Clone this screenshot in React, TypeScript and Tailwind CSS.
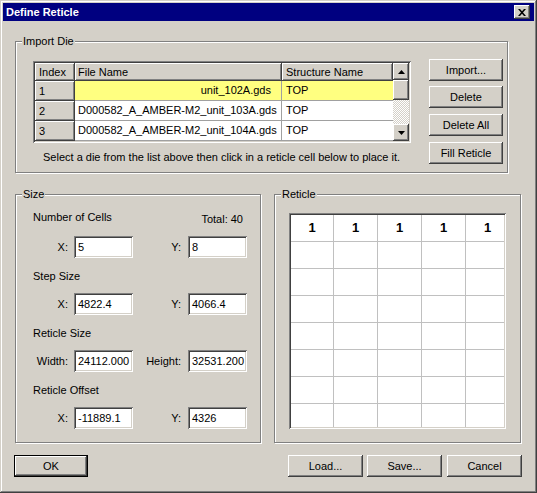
import React from 'react';

const raised =
  'bg-[#d4d0c8] shadow-[inset_-1px_-1px_0_#404040,inset_1px_1px_0_#ffffff,inset_-2px_-2px_0_#808080,inset_2px_2px_0_#d4d0c8]';
const sunken =
  'bg-white shadow-[inset_1px_1px_0_#808080,inset_-1px_-1px_0_#ffffff,inset_2px_2px_0_#404040,inset_-2px_-2px_0_#d4d0c8]';
const etched = 'border border-[#808080] shadow-[1px_1px_0_#ffffff,inset_1px_1px_0_#ffffff]';

function Btn({ children, className = '' }: { children: React.ReactNode; className?: string }) {
  return (
    <div className={`${raised} h-[22px] flex items-center justify-center text-[11px] text-black ${className}`}>
      {children}
    </div>
  );
}

function Field({ value }: { value: string }) {
  return (
    <div className={`${sunken} w-[59px] h-[22px] flex items-center pl-[4px] text-[11px] text-black`}>{value}</div>
  );
}

function Group({
  label,
  className = '',
  children,
}: {
  label: string;
  className?: string;
  children: React.ReactNode;
}) {
  return (
    <div className={`relative ${etched} ${className}`}>
      <div className="absolute -top-[7px] left-[6px] bg-[#d4d0c8] px-[1px] text-[11px] leading-[13px] text-black">
        {label}
      </div>
      {children}
    </div>
  );
}

function FieldRow({
  l1,
  v1,
  l2,
  v2,
  className = '',
}: {
  l1: string;
  v1: string;
  l2: string;
  v2: string;
  className?: string;
}) {
  return (
    <div className={`flex items-center ${className}`}>
      <div className="w-[41px] text-right pr-[6px] text-[11px]">{l1}</div>
      <Field value={v1} />
      <div className="w-[55px] text-right pr-[7px] text-[11px]">{l2}</div>
      <Field value={v2} />
    </div>
  );
}

function Arrow({ up }: { up: boolean }) {
  return (
    <svg width="7" height="4" viewBox="0 0 7 4">
      {up ? <polygon points="3.5,0 7,4 0,4" fill="#000" /> : <polygon points="0,0 7,0 3.5,4" fill="#000" />}
    </svg>
  );
}

const rows = [
  { i: '1', f: 'unit_102A.gds', s: 'TOP', sel: true },
  { i: '2', f: 'D000582_A_AMBER-M2_unit_103A.gds', s: 'TOP', sel: false },
  { i: '3', f: 'D000582_A_AMBER-M2_unit_104A.gds', s: 'TOP', sel: false },
];

export default function App() {
  return (
    <div className="w-[537px] h-[493px] bg-[#d4d0c8] p-[3px] font-['Liberation_Sans',Arial,sans-serif] text-black shadow-[inset_-1px_-1px_0_#404040,inset_1px_1px_0_#d4d0c8,inset_-2px_-2px_0_#808080,inset_2px_2px_0_#ffffff] overflow-hidden">
      {/* Title bar */}
      <div className="h-[18px] bg-[#000080] flex items-center justify-between pl-[3px] pr-[4px]">
        <span className="text-white font-bold text-[11px] leading-[13px]">Define Reticle</span>
        <div className={`${raised} w-[16px] h-[14px] flex items-center justify-center`}>
          <svg width="8" height="7" viewBox="0 0 8 7">
            <path d="M0 0h2l2 2.2L6 0h2L5 3.5 8 7H6L4 4.8 2 7H0l3-3.5z" fill="#000" />
          </svg>
        </div>
      </div>

      <div className="pl-[12px] pr-[12px]">
        {/* Import Die */}
        <Group label="Import Die" className="mt-[20px] w-[493px] h-[132px]">
          <div className="flex items-start pt-[17px] pl-[17px]">
            <div className="pt-[2px]">
              <div className={`${sunken} w-[378px] h-[82px] p-[2px] flex`}>
                <div className="flex flex-col">
                  {/* header */}
                  <div className="flex h-[18px] text-[11px]">
                    <div className={`${raised} w-[40px] flex items-center pl-[4px]`}>Index</div>
                    <div className={`${raised} w-[207px] flex items-center pl-[3px]`}>File Name</div>
                    <div className={`${raised} w-[111px] flex items-center pl-[4px]`}>Structure Name</div>
                  </div>
                  {rows.map((r) => (
                    <div key={r.i} className="flex h-[20px] text-[11px]">
                      <div className={`${raised} w-[40px] flex items-center pl-[4px]`}>{r.i}</div>
                      <div
                        className={`w-[207px] flex items-center border-r border-b border-[#a0a0a0] whitespace-nowrap overflow-hidden ${
                          r.sel ? 'bg-[#ffff80] justify-end pr-[10px]' : 'bg-white pl-[3px]'
                        }`}
                      >
                        {r.f}
                      </div>
                      <div
                        className={`w-[111px] flex items-center pl-[4px] border-b border-[#a0a0a0] ${
                          r.sel ? 'bg-[#ffff80]' : 'bg-white'
                        }`}
                      >
                        {r.s}
                      </div>
                    </div>
                  ))}
                </div>
                {/* scrollbar */}
                <div className="w-[16px] flex flex-col">
                  <div className={`${raised} h-[17px] flex items-center justify-center`}>
                    <Arrow up />
                  </div>
                  <div className={`${raised} h-[20px]`} />
                  <div className="flex-1 bg-[repeating-conic-gradient(#ffffff_0_25%,#d4d0c8_0_50%)] bg-[length:2px_2px]" />
                  <div className={`${raised} h-[17px] flex items-center justify-center`}>
                    <Arrow up={false} />
                  </div>
                </div>
              </div>
              <div className="mt-[8px] ml-[10px] text-[11px] leading-[13px] whitespace-nowrap">
                Select a die from the list above then click in a reticle cell below to place it.
              </div>
            </div>
            <div className="ml-[18px] flex flex-col gap-[5px] pt-0">
              <Btn className="w-[74px]">Import...</Btn>
              <Btn className="w-[74px]">Delete</Btn>
              <Btn className="w-[74px] mt-[1px]">Delete All</Btn>
              <Btn className="w-[74px] mt-[1px]">Fill Reticle</Btn>
            </div>
          </div>
        </Group>

        {/* Size + Reticle */}
        <div className="flex gap-[13px] mt-[21px]">
          <Group label="Size" className="w-[246px] h-[249px]">
            <div className="pt-[15px] pl-[17px] text-[11px]">
              <div className="flex justify-between items-start w-[210px] leading-[14px]">
                <span>Number of Cells</span>
                <span className="pt-[2px]">Total: 40</span>
              </div>
              <FieldRow l1="X:" v1="5" l2="Y:" v2="8" className="mt-[10px]" />
              <div className="mt-[11px] leading-[14px]">Step Size</div>
              <FieldRow l1="X:" v1="4822.4" l2="Y:" v2="4066.4" className="mt-[10px]" />
              <div className="mt-[11px] leading-[14px]">Reticle Size</div>
              <FieldRow l1="Width:" v1="24112.000" l2="Height:" v2="32531.200" className="mt-[10px]" />
              <div className="mt-[11px] leading-[14px]">Reticle Offset</div>
              <FieldRow l1="X:" v1="-11889.1" l2="Y:" v2="4326" className="mt-[10px]" />
            </div>
          </Group>
          <Group label="Reticle" className="w-[247px] h-[249px]">
            <div className="pt-[18px] pl-[14px]">
              <div className={`${sunken} w-[217px] h-[216px] p-[2px]`}>
                <div className="w-[213px] h-[212px] overflow-hidden bg-white">
                  {Array.from({ length: 8 }).map((_, r) => (
                    <div key={r} className="flex h-[27px]">
                      {[43, 44, 44, 44, 44].map((w, c) => (
                        <div
                          key={c}
                          className={`shrink-0 h-[27px] border-r border-b border-[#c0c0c0] flex items-center justify-center font-bold text-[13px] ${
                            w === 43 ? 'w-[43px]' : 'w-[44px]'
                          }`}
                        >
                          {r === 0 ? '1' : ''}
                        </div>
                      ))}
                    </div>
                  ))}
                </div>
              </div>
            </div>
          </Group>
        </div>

        {/* bottom buttons */}
        <div className="flex justify-between mt-[12px]">
          <div className="-ml-[1px] w-[74px] h-[22px] border border-black">
            <Btn className="w-full h-full">OK</Btn>
          </div>
          <div className="flex gap-[4px]">
            <Btn className="w-[75px]">Load...</Btn>
            <Btn className="w-[75px]">Save...</Btn>
            <Btn className="w-[75px] ml-[1px]">Cancel</Btn>
          </div>
        </div>
      </div>
    </div>
  );
}
